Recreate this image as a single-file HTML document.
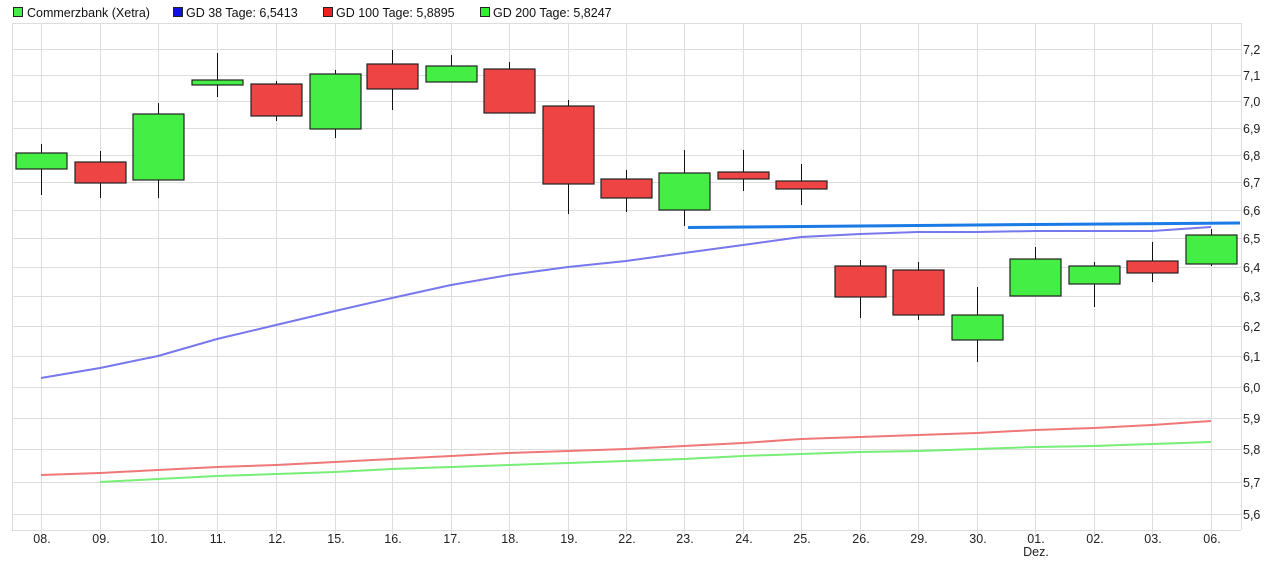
<!DOCTYPE html>
<html><head><meta charset="utf-8"><style>
html,body{margin:0;padding:0;background:#fff;width:1279px;height:568px;overflow:hidden}
svg{display:block;font-family:"Liberation Sans",sans-serif}
</style></head><body>
<svg width="1279" height="568" xmlns="http://www.w3.org/2000/svg">
<g font-size="12.5" fill="#111">
<rect x="13.5" y="7.5" width="9" height="9" fill="#44ee44" stroke="#222"/><text x="27" y="17">Commerzbank (Xetra)</text>
<rect x="173.5" y="7.5" width="9" height="9" fill="#1111dd" stroke="#222"/><text x="186" y="17">GD 38 Tage: 6,5413</text>
<rect x="323.5" y="7.5" width="9" height="9" fill="#ee2222" stroke="#222"/><text x="336" y="17">GD 100 Tage: 5,8895</text>
<rect x="480.5" y="7.5" width="9" height="9" fill="#33ee33" stroke="#222"/><text x="493" y="17">GD 200 Tage: 5,8247</text>
</g>
<g stroke="#dddddd" stroke-width="1">
<path d="M12 23.5H1241M12 49.5H1241M12 75.5H1241M12 101.5H1241M12 128.5H1241M12 155.5H1241M12 182.5H1241M12 210.5H1241M12 238.5H1241M12 267.5H1241M12 296.5H1241M12 326.5H1241M12 356.5H1241M12 387.5H1241M12 418.5H1241M12 449.5H1241M12 482.5H1241M12 514.5H1241M12 530.5H1241"/>
<path d="M12.5 23V530M1241.5 23V530M41.5 23V534M100.5 23V534M158.5 23V534M217.5 23V534M276.5 23V534M335.5 23V534M392.5 23V534M451.5 23V534M509.5 23V534M568.5 23V534M626.5 23V534M684.5 23V534M743.5 23V534M801.5 23V534M860.5 23V534M918.5 23V534M977.5 23V534M1035.5 23V534M1094.5 23V534M1152.5 23V534M1211.5 23V534"/>
</g>
<g font-size="12.5" fill="#222">
<text x="1243" y="54">7,2</text><text x="1243" y="80">7,1</text><text x="1243" y="106">7,0</text><text x="1243" y="133">6,9</text><text x="1243" y="160">6,8</text><text x="1243" y="187">6,7</text><text x="1243" y="215">6,6</text><text x="1243" y="243">6,5</text><text x="1243" y="272">6,4</text><text x="1243" y="301">6,3</text><text x="1243" y="331">6,2</text><text x="1243" y="361">6,1</text><text x="1243" y="392">6,0</text><text x="1243" y="423">5,9</text><text x="1243" y="454">5,8</text><text x="1243" y="487">5,7</text><text x="1243" y="519">5,6</text>
</g>
<g font-size="12.5" fill="#222" text-anchor="middle">
<text x="42" y="543">08.</text><text x="101" y="543">09.</text><text x="159" y="543">10.</text><text x="218" y="543">11.</text><text x="277" y="543">12.</text><text x="336" y="543">15.</text><text x="393" y="543">16.</text><text x="452" y="543">17.</text><text x="510" y="543">18.</text><text x="569" y="543">19.</text><text x="627" y="543">22.</text><text x="685" y="543">23.</text><text x="744" y="543">24.</text><text x="802" y="543">25.</text><text x="861" y="543">26.</text><text x="919" y="543">29.</text><text x="978" y="543">30.</text><text x="1036" y="543">01.</text><text x="1036" y="556">Dez.</text><text x="1095" y="543">02.</text><text x="1153" y="543">03.</text><text x="1212" y="543">06.</text>
</g>
<g stroke="#111" stroke-width="1">
<path d="M41.5 144V195M100.5 151V198M158.5 103V198M217.5 53V97M276.5 81V121M335.5 70V138M392.5 50V110M451.5 55V82M509.5 62V113M568.5 100V214M626.5 170V212M684.5 150V226M743.5 150V191M801.5 164V205M860.5 260V318M918.5 262V320M977.5 287V362M1035.5 247V296M1094.5 262V307M1152.5 242V282M1211.5 229V266"/>
</g>
<g stroke="#222" stroke-width="1.2">
<rect x="16" y="153" width="51" height="16" fill="#44ee44"/>
<rect x="75" y="162" width="51" height="21" fill="#ee4444"/>
<rect x="133" y="114" width="51" height="66" fill="#44ee44"/>
<rect x="192" y="80" width="51" height="5" fill="#44ee44"/>
<rect x="251" y="84" width="51" height="32" fill="#ee4444"/>
<rect x="310" y="74" width="51" height="55" fill="#44ee44"/>
<rect x="367" y="64" width="51" height="25" fill="#ee4444"/>
<rect x="426" y="66" width="51" height="16" fill="#44ee44"/>
<rect x="484" y="69" width="51" height="44" fill="#ee4444"/>
<rect x="543" y="106" width="51" height="78" fill="#ee4444"/>
<rect x="601" y="179" width="51" height="19" fill="#ee4444"/>
<rect x="659" y="173" width="51" height="37" fill="#44ee44"/>
<rect x="718" y="172" width="51" height="7" fill="#ee4444"/>
<rect x="776" y="181" width="51" height="8" fill="#ee4444"/>
<rect x="835" y="266" width="51" height="31" fill="#ee4444"/>
<rect x="893" y="270" width="51" height="45" fill="#ee4444"/>
<rect x="952" y="315" width="51" height="25" fill="#44ee44"/>
<rect x="1010" y="259" width="51" height="37" fill="#44ee44"/>
<rect x="1069" y="266" width="51" height="18" fill="#44ee44"/>
<rect x="1127" y="261" width="51" height="12" fill="#ee4444"/>
<rect x="1186" y="235" width="51" height="29" fill="#44ee44"/>
</g>
<polyline fill="none" stroke="#7777ee" stroke-width="2" points="41,378 100,368 158,356 217,339 276,325 335,311 392,298 451,285 509,275 568,267 626,261 684,253 743,245 801,237 860,234 918,232 977,232 1035,231 1094,231 1152,231 1211,227"/>
<polyline fill="none" stroke="#1a7ae6" stroke-width="3" points="688,227.5 860,226 1035,224.5 1240,223"/>
<polyline fill="none" stroke="#ee7777" stroke-width="2" points="41,475 100,473 158,470 217,467 276,465 335,462 392,459 451,456 509,453 568,451 626,449 684,446 743,443 801,439 860,437 918,435 977,433 1035,430 1094,428 1152,425 1211,421"/>
<polyline fill="none" stroke="#77ee77" stroke-width="2" points="100,482 158,479 217,476 276,474 335,472 392,469 451,467 509,465 568,463 626,461 684,459 743,456 801,454 860,452 918,451 977,449 1035,447 1094,446 1152,444 1211,442"/>
</svg>
</body></html>
